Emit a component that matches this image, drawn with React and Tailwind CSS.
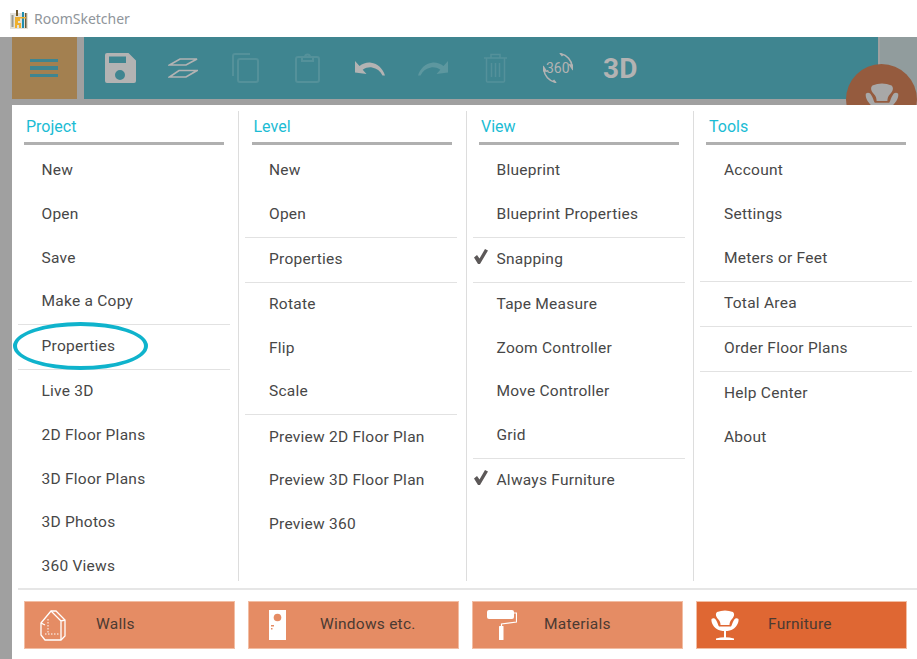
import React from "react";

const Chair = ({ className }) => (
  <svg viewBox="0 0 28 30" className={className} fill="currentColor">
    <path d="M6 2Q14-1 22 2C24 4 23 7 21 9C19 11 18.500 13 18.500 15H9.500C9.500 13 9 11 7 9C5 7 4 4 6 2z" />
    <path d="M.5 9C2 7.500 4 8 5 10C6.500 12 7 15 8 16.500H20C21 15 21.500 12 23 10C24 8 26 7.500 27.500 9C28 12 26 16 23 18.500C20.500 20.500 17 21 14 21C11 21 7.500 20.500 5 18.500C2 16 0 12 .5 9z" />
    <rect x="13" y="21" width="2" height="7" />
    <path d="M5 28.500Q14 26 23 28.500V30H5z" />
  </svg>
);

const Save = () => (
  <svg viewBox="0 0 31 30" className="w-[31px] h-[30px] text-[#b3b3b3]" fill="currentColor">
    <path fillRule="evenodd" d="M2 0h21.500L31 7.500V28a2 2 0 0 1-2 2H2a2 2 0 0 1-2-2V2a2 2 0 0 1 2-2zM4 3.500V10h17V3.500zM15 17a5 5 0 1 0 0 10 5 5 0 0 0 0-10z" />
  </svg>
);
const Layers = () => (
  <svg viewBox="0 0 30 20" className="w-[30px] h-[20px] text-[#b3b3b3]" fill="none" stroke="currentColor" strokeWidth="1.700">
    <path d="M1.500 7L12 1H29L18 7z" />
    <path d="M1.500 19L11 12.500H29L18 19z" />
  </svg>
);
const Copy = () => (
  <svg viewBox="0 0 27 30" className="w-[27px] h-[30px] text-[#54919a]" fill="none" stroke="currentColor" strokeWidth="2">
    <path d="M1 23V3a2 2 0 0 1 2-2h15" />
    <rect x="6" y="6" width="20" height="23" rx="2" />
  </svg>
);
const Paste = () => (
  <svg viewBox="0 0 25 30" className="w-[25px] h-[30px] text-[#54919a]" fill="none" stroke="currentColor" strokeWidth="2">
    <rect x="1" y="4" width="23" height="25" rx="2" />
    <path d="M7 4h3c0-3.500 5-3.500 5 0h3v4H7z" />
  </svg>
);
const Undo = ({ flip }) => (
  <svg viewBox="0 0 30 16" className={"w-[30px] h-[16px] " + (flip ? "-scale-x-100 text-[#5d979f]" : "text-[#b3b3b3]")} fill="currentColor">
    <path d="M0 1l0 11.500 11.500 1.500-3.800-4.200C11 7.700 14 7 17 7.500c4.500 .8 8.500 3.500 10.500 8l2.500 0C28 8.500 22.500 3.500 16 2.700 11.800 2.200 7.800 3.500 4.500 6z" />
  </svg>
);
const Trash = () => (
  <svg viewBox="0 0 23 30" className="w-[23px] h-[30px] text-[#54919a]" fill="none" stroke="currentColor" strokeWidth="1.500">
    <path d="M0 5h23M7 5V1.500h9V5M2.500 5v23a1 1 0 0 0 1 1h16a1 1 0 0 0 1-1V5M7.500 10v14M11.500 10v14M15.500 10v14" />
  </svg>
);
const Rot360 = () => (
  <div className="relative w-[30px] h-[30px] flex items-center justify-center text-[#b3b3b3]">
    <svg viewBox="0 0 30 30" className="absolute inset-0 w-[30px] h-[30px]" fill="none" stroke="currentColor" strokeWidth="1.600">
      <path d="M18 .8C24 2 28.500 7 29.200 13.500" />
      <path d="M12 29.200C6 28 1.500 23 .8 16.500" />
      <path d="M27 12l2.500 4 2-3.500zM3 18l-2.500-4-2 3.500z" fill="currentColor" />
      <path d="M17 0l2.500 3M13 30l-2.500-3" />
    </svg>
    <span className="text-[14px] leading-none" style={{ fontFamily: "Roboto, sans-serif" }}>360</span>
  </div>
);
const ToolIcon = ({ children }) => <div className="w-[62.5px] flex items-center justify-center">{children}</div>;

const Hamburger = () => (
  <div className="flex flex-col gap-[4px] mr-[1px]">
    <div className="w-[28px] h-[3.500px] bg-[#3f8590]" />
    <div className="w-[28px] h-[3.500px] bg-[#3f8590]" />
    <div className="w-[28px] h-[3.500px] bg-[#3f8590]" />
  </div>
);

const Logo = () => (
  <svg viewBox="0 0 18 20" className="w-[18px] h-[20px]">
    <rect x="0" y="4" width="18" height="16" fill="#e4e2da" />
    <rect x="1.500" y="6" width="2" height="12" fill="#9a9a90" />
    <path d="M5 8h5v4H8v2h3v5H9v-3H7v3H5z" fill="#eeb02e" />
    <rect x="6" y="1" width="2" height="6" fill="#705a30" />
    <rect x="12" y="3" width="2" height="16" fill="#1f8fb0" />
    <rect x="15" y="4" width="1.500" height="15" fill="#6a5a3a" />
    <rect x="9" y="8" width="7" height="1.500" fill="#eeb02e" />
  </svg>
);

const columns = [
  { title: "Project", ul: "ml-[12px]", ti: "ml-[2px]", pad: "pl-[29.500px]", w: "w-[227px]", items: [["New"], ["Open"], ["Save"], ["Make a Copy", 1], ["Properties", 1], ["Live 3D"], ["2D Floor Plans"], ["3D Floor Plans"], ["3D Photos"], ["360 Views"]] },
  { title: "Level", ul: "ml-[12.500px]", ti: "ml-[2px]", pad: "pl-[30px]", w: "w-[228px]", items: [["New"], ["Open", 1], ["Properties", 1], ["Rotate"], ["Flip"], ["Scale", 1], ["Preview 2D Floor Plan"], ["Preview 3D Floor Plan"], ["Preview 360"]] },
  { title: "View", ul: "ml-[12px]", ti: "ml-[2px]", pad: "pl-[29.500px]", w: "w-[227px]", items: [["Blueprint"], ["Blueprint Properties", 1], ["Snapping", 1, 1], ["Tape Measure"], ["Zoom Controller"], ["Move Controller"], ["Grid", 1], ["Always Furniture", 0, 1]] },
  { title: "Tools", ul: "ml-[12px]", ti: "ml-[3px]", pad: "pl-[30px]", w: "w-[223px]", items: [["Account"], ["Settings"], ["Meters or Feet", 1], ["Total Area", 1], ["Order Floor Plans", 1], ["Help Center"], ["About"]] },
];

const Check = () => (
  <svg viewBox="0 0 14 15" className="absolute left-[-23px] top-[1px] w-[14px] h-[15px] text-[#5c5858]" fill="currentColor">
    <path d="M0 8.500L3 6l2.500 3.500L11 0l3 1.500L6 15H4z" />
  </svg>
);

const Column = ({ col, border }) => (
  <div className={"shrink-0 h-[470px] mt-[6px] relative " + col.w + (border ? " border-r border-[#dddddd]" : "")}>
    <div className={"pt-[6px] w-[200px] h-[25px] border-b-[3px] border-[#b0b0b0] box-content " + col.ul}>
      <div className={"text-[16px] leading-[19px] text-[#1bbcd4] " + col.ti}>{col.title}</div>
    </div>
    <div className="mt-[4.300px]">
      {col.items.map(([label, divider, checked]) => (
        <React.Fragment key={label}>
          <div className={"h-[43.600px] flex items-center text-[#474747] text-[15.500px] tracking-[0.25px] " + col.pad}>
            <span className="relative">
              {checked ? <Check /> : null}
              {label}
            </span>
          </div>
          {divider ? <div className="h-px ml-[6px] w-[212px] bg-[#e2e2e2] mt-[0.500px]" /> : null}
        </React.Fragment>
      ))}
    </div>
  </div>
);

const WallsIcon = () => (
  <svg viewBox="0 0 26 31" className="w-[26px] h-[31px] text-white" fill="none" stroke="currentColor" strokeWidth="1.300">
    <path d="M1 13L11 1h5l9 9v16l-4 4H5l-4-5z" />
    <path d="M11 1l10 10 4-1M21 11v19M1 13l4 2" />
    <path d="M8 9v15M5 24h15" strokeWidth="1" strokeDasharray="1.500 1.500" />
  </svg>
);
const DoorIcon = () => (
  <svg viewBox="0 0 17 30" className="w-[17px] h-[30px]">
    <rect width="17" height="30" fill="#ffffff" />
    <circle cx="8.500" cy="7.500" r="3.800" fill="#e58c64" />
    <rect x="2" y="15" width="3" height="1.500" fill="#e58c64" />
    <rect x="2" y="18" width="1.500" height="1.500" fill="#e58c64" />
  </svg>
);
const RollerIcon = () => (
  <svg viewBox="0 0 30 30" className="w-[30px] h-[30px] text-white" fill="currentColor">
    <rect x="0" y="0" width="27" height="9" rx="2" />
    <path d="M27 3h2.500v9l-15 2v2" fill="none" stroke="currentColor" strokeWidth="1.200" />
    <rect x="12" y="16" width="4.500" height="14" rx="0.500" />
  </svg>
);

const buttons = [
  { label: "Walls", icon: <WallsIcon />, iconBox: "ml-[15px]", bg: "bg-[#e58c64]" },
  { label: "Windows etc.", icon: <DoorIcon />, iconBox: "ml-[20px]", bg: "bg-[#e58c64]" },
  { label: "Materials", icon: <RollerIcon />, iconBox: "ml-[14px]", bg: "bg-[#e58c64]" },
  { label: "Furniture", icon: <Chair className="w-[28px] h-[30px] text-white" />, iconBox: "ml-[14px]", bg: "bg-[#df6733]" },
];

export default function App() {
  return (
    <div className="relative w-[917px] h-[659px] overflow-hidden bg-[#a0a0a0]" style={{ fontFamily: "Roboto, sans-serif" }}>
      <div className="h-[37px] bg-white flex items-center pl-[10px] gap-[6px]">
        <Logo />
        <span className="text-[14px] text-[#8f959b]" style={{ fontFamily: "'Noto Sans', sans-serif" }}>RoomSketcher</span>
      </div>
      <div className="relative h-[68px] flex items-start bg-[#a0a0a0]">
        <div className="ml-[12px] w-[65px] h-[62px] bg-[#a38050] flex items-center justify-center">
          <Hamburger />
        </div>
        <div className="ml-[7px] w-[794px] h-[62px] bg-[#3f8590] flex items-center pl-[5px]">
          <ToolIcon><Save /></ToolIcon>
          <ToolIcon><Layers /></ToolIcon>
          <ToolIcon><Copy /></ToolIcon>
          <ToolIcon><Paste /></ToolIcon>
          <ToolIcon><Undo /></ToolIcon>
          <ToolIcon><Undo flip /></ToolIcon>
          <ToolIcon><Trash /></ToolIcon>
          <ToolIcon><Rot360 /></ToolIcon>
          <ToolIcon><span className="text-[28px] leading-none font-bold text-[#b3b3b3] pt-[2px]">3D</span></ToolIcon>
        </div>
        <div className="flex-1 h-[62px] bg-[#919c9d] ml-[2px]" />
        <div className="absolute left-[846px] top-[27px] w-[71px] h-[71px] rounded-full bg-[#955b3e] flex justify-center overflow-hidden">
          <Chair className="w-[34px] h-[36px] mt-[19px] text-[#a8a8a8]" />
        </div>
      </div>
      <div className="relative ml-[12px] h-[554px] bg-white">
        <div className="flex">
          <Column col={columns[0]} border />
          <Column col={columns[1]} border />
          <Column col={columns[2]} border />
          <Column col={columns[3]} />
        </div>
        <div className="ml-[6px] mt-[7px] h-[2px] bg-[#e6e6e6]" />
        <div className="ml-[12px] mt-[11px] flex gap-[13px]">
          {buttons.map((b) => (
            <div key={b.label} className={"relative w-[211px] h-[48px] flex items-center border border-[#f2bda3] " + b.bg}>
              <div className={"absolute left-0 top-0 h-full flex items-center " + b.iconBox}>{b.icon}</div>
              <span className="ml-[71px] text-[15.500px] text-[#4b3a32] tracking-[0.25px]">{b.label}</span>
            </div>
          ))}
        </div>
        <div className="absolute left-[1px] top-[217px] w-[135px] h-[48px] rounded-[50%] border-[4px] border-[#0fb3cc]" />
      </div>
    </div>
  );
}
